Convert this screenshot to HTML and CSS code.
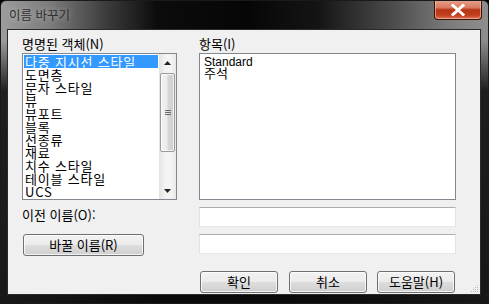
FILE: index.html
```html
<!DOCTYPE html>
<html lang="ko">
<head>
<meta charset="utf-8">
<link rel="stylesheet" href="styles.css">
</head>
<body>
<div class="window">
  <div class="titlebar">
    <span class="title">이름 바꾸기</span>
    <div class="close">
      <svg width="16" height="12" viewBox="0 0 16 12"><path d="M3 1.5 L13 10.5 M13 1.5 L3 10.5" stroke="#fff" stroke-width="3" stroke-linecap="square"/></svg>
    </div>
  </div>
  <div class="client">
    <div class="grid">
      <div class="lbl">명명된 객체(N)</div>
      <div class="lbl">항목(I)</div>
      <div class="listbox">
        <ul class="items">
          <li class="sel">다중 지시선 스타일</li>
          <li>도면층</li>
          <li>문자 스타일</li>
          <li>뷰</li>
          <li>뷰포트</li>
          <li>블록</li>
          <li>선종류</li>
          <li>재료</li>
          <li>치수 스타일</li>
          <li>테이블 스타일</li>
          <li>UCS</li>
        </ul>
        <div class="scrollbar">
          <div class="arrow"><svg width="7" height="4" viewBox="0 0 7 4"><path d="M0 4 L3.5 0 L7 4Z" fill="#222"/></svg></div>
          <div class="track">
            <div class="thumb"><span class="grip-lines"></span></div>
          </div>
          <div class="arrow"><svg width="7" height="4" viewBox="0 0 7 4"><path d="M0 0 L7 0 L3.5 4Z" fill="#222"/></svg></div>
        </div>
      </div>
      <div class="listbox">
        <ul class="items plain">
          <li>Standard</li>
          <li>주석</li>
        </ul>
      </div>
      <div class="lbl lbl-old">이전 이름(O):</div>
      <div class="field field-old"></div>
      <div class="rename-cell"><button class="btn btn-rename">바꿀 이름(R)</button></div>
      <div class="field field-new"></div>
    </div>
    <div class="buttons">
      <button class="btn">확인</button>
      <button class="btn">취소</button>
      <button class="btn">도움말(H)</button>
    </div>
    <svg class="sizegrip" width="10" height="10" viewBox="0 0 10 10">
      <g fill="#b8b8b8">
        <rect x="8" y="2" width="1" height="1"/>
        <rect x="6" y="4" width="1" height="1"/><rect x="8" y="4" width="1" height="1"/>
        <rect x="4" y="6" width="1" height="1"/><rect x="6" y="6" width="1" height="1"/><rect x="8" y="6" width="1" height="1"/>
        <rect x="2" y="8" width="1" height="1"/><rect x="4" y="8" width="1" height="1"/><rect x="6" y="8" width="1" height="1"/><rect x="8" y="8" width="1" height="1"/>
      </g>
    </svg>
  </div>
</div>
</body>
</html>
```

FILE: styles.css
```css
* { box-sizing: border-box; }
html, body { margin: 0; padding: 0; background: #000; }
body { font-family: "Noto Sans CJK KR", "Liberation Sans", sans-serif; font-size: 12px; color: #000; }

.window {
  width: 489px;
  height: 304px;
  display: flex;
  flex-direction: column;
  border: 1px solid #1a1a1a;
  border-radius: 6px 6px 0 0;
  background:
    linear-gradient(to bottom, rgba(0,0,0,0) 0, rgba(0,0,0,0) 40px, rgba(10,10,10,0.85) 90px, rgba(10,10,10,0.9) 100%),
    linear-gradient(to right, #9c9c9c 0%, #7c7c7c 10%, #3a3a3a 22%, #0c0c0c 32%, #060606 50%, #141414 65%, #4a4a4a 80%, #7c7c7c 92%, #8e8e8e 100%);
  overflow: hidden;
}

.titlebar {
  height: 28px;
  flex: none;
  display: flex;
  align-items: flex-start;
  justify-content: space-between;
  padding-left: 8px;
}
.title {
  margin-top: 7px;
  font-size: 12.5px;
  line-height: 14px;
  color: #303030;
  text-shadow: 0 0 6px rgba(255,255,255,0.45);
}
.close {
  width: 48px;
  height: 20px;
  margin-right: 6px;
  margin-top: -1px;
  border: 1px solid #3b1208;
  border-top: none;
  border-radius: 0 0 4px 4px;
  box-shadow: inset 0 0 0 1px rgba(255,210,190,0.55);
  background: linear-gradient(to bottom, #e6a48f 0%, #d77a60 40%, #b73414 52%, #c2401e 80%, #e0745a 100%);
  display: flex;
  align-items: center;
  justify-content: center;
}

.client {
  position: relative;
  flex: 1;
  margin: 0 7px 8px 6px;
  background: #f0f0f0;
  border: 1px solid #2a2a2a;
  padding: 7px 0 0 14px;
}

.grid {
  display: grid;
  grid-template-columns: 155px 257px;
  column-gap: 22px;
}

.lbl {
  height: 16px;
  line-height: 14px;
  font-size: 13px;
  white-space: nowrap;
}

.listbox {
  height: 147px;
  border: 1px solid #828790;
  background: #fff;
  display: flex;
}
.items {
  list-style: none;
  margin: 0;
  padding: 1px 1px 0 1px;
  flex: 1;
  overflow: hidden;
}
.items li {
  height: 13px;
  line-height: 13px;
  font-size: 13px;
  letter-spacing: 0.8px;
  padding-left: 1px;
  white-space: nowrap;
}
.items li.sel { background: #3399ff; color: #fff; }
.items.plain { padding-left: 3px; padding-top: 2px; }
.items.plain li { font-family: "Liberation Sans", "Noto Sans CJK KR", sans-serif; font-size: 12px; line-height: 12px; height: 11px; letter-spacing: 0; }
.items.plain li:nth-child(2) { font-family: "Noto Sans CJK KR", sans-serif; font-size: 13px; }

.scrollbar {
  width: 17px;
  flex: none;
  display: flex;
  flex-direction: column;
  background: linear-gradient(to right, #e3e3e3, #f4f4f4 40%, #f4f4f4 70%, #e8e8e8);
}
.arrow {
  height: 17px;
  flex: none;
  display: flex;
  align-items: center;
  justify-content: center;
}
.track {
  flex: 1;
  padding: 2px 1px 0 1px;
}
.thumb {
  height: 79px;
  border: 1px solid #9a9a9a;
  border-radius: 2px;
  background: linear-gradient(to right, #f2f2f2 0%, #ebebeb 45%, #d6d6d6 55%, #cfcfcf 100%);
  box-shadow: inset 0 0 0 1px rgba(255,255,255,0.7);
  display: flex;
  align-items: center;
  justify-content: center;
}
.grip-lines {
  width: 6px;
  height: 5px;
  background: repeating-linear-gradient(to bottom, #6a6a6a 0, #6a6a6a 1px, transparent 1px, transparent 2px);
}

.lbl-old { margin-top: 8px; font-size: 13px; }
.field {
  height: 20px;
  background: #fff;
  border: 1px solid #dbdfe6;
  border-top-color: #abadb3;
  border-left-color: #e2e3ea;
  border-right-color: #e2e3ea;
  border-bottom-color: #e3e9ef;
}
.field-old { margin-top: 7px; }
.field-new { margin-top: 7px; }
.rename-cell { margin-top: 7px; padding-left: 1px; }

.btn {
  font-family: "Noto Sans CJK KR", "Liberation Sans", sans-serif;
  font-size: 13px;
  line-height: 14px;
  color: #000;
  height: 22px;
  width: 78px;
  padding: 0;
  border: 1px solid #707070;
  border-radius: 3px;
  background: linear-gradient(to bottom, #f2f2f2 0%, #ebebeb 48%, #dddddd 52%, #cfcfcf 100%);
  box-shadow: inset 0 0 0 1px rgba(255,255,255,0.75);
}
.btn-rename { width: 121px; }

.buttons {
  display: flex;
  justify-content: flex-end;
  gap: 10px;
  width: 433px;
  margin-top: 15px;
}
.buttons .btn:first-child { margin-right: 1px; }

.sizegrip {
  position: absolute;
  right: 1px;
  bottom: 1px;
}
```
